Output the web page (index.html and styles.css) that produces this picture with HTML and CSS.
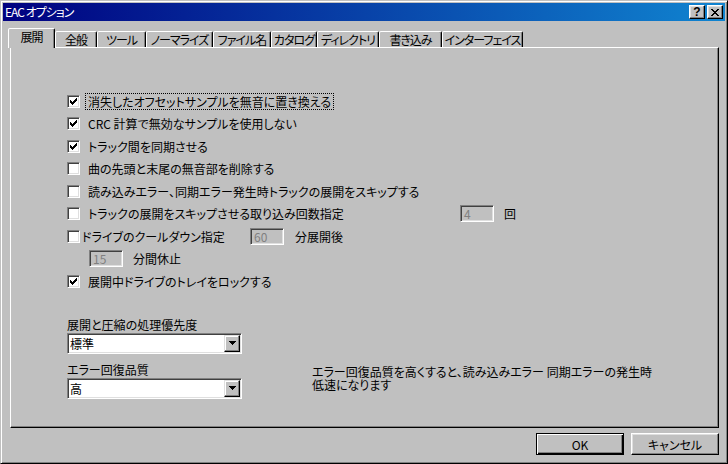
FILE: index.html
```html
<!DOCTYPE html>
<html lang="ja">
<head>
<meta charset="utf-8">
<title>EAC オプション</title>
<link rel="stylesheet" href="styles.css">
</head>
<body>
<div class="window">
  <div class="titlebar">
    <span class="title">EAC オプション</span>
    <div class="tbtns">
      <span class="tbtn q">?</span>
      <span class="tbtn"><svg width="8" height="7" viewBox="0 0 8 7" shape-rendering="crispEdges"><path d="M0 0h2v1h-2zM6 0h2v1h-2zM1 1h2v1h-2zM5 1h2v1h-2zM2 2h4v1h-4zM3 3h2v1h-2zM2 4h4v1h-4zM1 5h2v1h-2zM5 5h2v1h-2zM0 6h2v1h-2zM6 6h2v1h-2z" fill="#000"/></svg></span>
    </div>
  </div>

  <div class="tabs">
    <div class="tab active t1">展開</div>
    <div class="tab t2">全般</div>
    <div class="tab t3">ツール</div>
    <div class="tab t4">ノーマライズ</div>
    <div class="tab t5">ファイル名</div>
    <div class="tab t6">カタログ</div>
    <div class="tab t7">ディレクトリ</div>
    <div class="tab t8">書き込み</div>
    <div class="tab t9">インターフェイス</div>
  </div>

  <div class="panel">
    <div class="rows">
      <div class="row">
        <span class="cb"><svg width="11" height="11" viewBox="0 0 11 11" shape-rendering="crispEdges"><path d="M2 4h1v1h1v1h1v-1h1v-1h1v-1h1v-1h1v3h-1v1h-1v1h-1v1h-1v1h-1v-1h-1v-1h-1z" fill="#000"/></svg></span>
        <span class="lbl focus">消失したオフセットサンプルを無音に置き換える</span>
      </div>
      <div class="row">
        <span class="cb"><svg width="11" height="11" viewBox="0 0 11 11" shape-rendering="crispEdges"><path d="M2 4h1v1h1v1h1v-1h1v-1h1v-1h1v-1h1v3h-1v1h-1v1h-1v1h-1v1h-1v-1h-1v-1h-1z" fill="#000"/></svg></span>
        <span class="lbl">CRC 計算で無効なサンプルを使用しない</span>
      </div>
      <div class="row">
        <span class="cb"><svg width="11" height="11" viewBox="0 0 11 11" shape-rendering="crispEdges"><path d="M2 4h1v1h1v1h1v-1h1v-1h1v-1h1v-1h1v3h-1v1h-1v1h-1v1h-1v1h-1v-1h-1v-1h-1z" fill="#000"/></svg></span>
        <span class="lbl">トラック間を同期させる</span>
      </div>
      <div class="row">
        <span class="cb"></span>
        <span class="lbl">曲の先頭と末尾の無音部を削除する</span>
      </div>
      <div class="row">
        <span class="cb"></span>
        <span class="lbl">読み込みエラー、同期エラー発生時トラックの展開をスキップする</span>
      </div>
      <div class="row">
        <span class="cb"></span>
        <span class="lbl wide">トラックの展開をスキップさせる取り込み回数指定</span>
        <span class="tb">4</span>
        <span class="after">回</span>
      </div>
      <div class="row">
        <span class="cb"></span>
        <span class="lbl tight">ドライブのクールダウン指定</span>
        <span class="tb">60</span>
        <span class="after a11">分展開後</span>
      </div>
      <div class="row indent">
        <span class="tb">15</span>
        <span class="after">分間休止</span>
      </div>
      <div class="row">
        <span class="cb"><svg width="11" height="11" viewBox="0 0 11 11" shape-rendering="crispEdges"><path d="M2 4h1v1h1v1h1v-1h1v-1h1v-1h1v-1h1v3h-1v1h-1v1h-1v1h-1v1h-1v-1h-1v-1h-1z" fill="#000"/></svg></span>
        <span class="lbl">展開中ドライブのトレイをロックする</span>
      </div>
    </div>

    <div class="bottom">
      <div class="combos">
        <div class="clabel">展開と圧縮の処理優先度</div>
        <div class="combo">
          <span class="cval">標準</span>
          <span class="cbtn"><svg width="7" height="4" viewBox="0 0 7 4" shape-rendering="crispEdges"><path d="M0 0h7v1h-1v1h-1v1h-1v1h-1v-1h-1v-1h-1v-1h-1z" fill="#000"/></svg></span>
        </div>
        <div class="clabel second">エラー回復品質</div>
        <div class="combo">
          <span class="cval">高</span>
          <span class="cbtn"><svg width="7" height="4" viewBox="0 0 7 4" shape-rendering="crispEdges"><path d="M0 0h7v1h-1v1h-1v1h-1v1h-1v-1h-1v-1h-1v-1h-1z" fill="#000"/></svg></span>
        </div>
      </div>
      <div class="note">エラー回復品質を高くすると、読み込みエラー 同期エラーの発生時<br>低速になります</div>
    </div>
  </div>

  <div class="footer">
    <button class="btn default">OK</button>
    <button class="btn">キャンセル</button>
  </div>
</div>
</body>
</html>
```

FILE: styles.css
```css
html, body {
  margin: 0;
  padding: 0;
  background: #c0c0c0;
}
body {
  font-family: "Noto Sans CJK JP", "Noto Sans", sans-serif;
  font-size: 12px;
  color: #000;
  font-feature-settings: "palt";
}
.window {
  width: 728px;
  height: 464px;
  box-sizing: border-box;
  border: 1px solid;
  border-color: #c0c0c0 #000 #000 #c0c0c0;
  box-shadow: inset 1px 1px #fff, inset -1px -1px #808080;
  padding: 2px;
  display: flex;
  flex-direction: column;
  background: #c0c0c0;
}
.titlebar {
  height: 18px;
  flex: none;
  background: linear-gradient(to right, #000080, #1084d0);
  display: flex;
  align-items: center;
  justify-content: space-between;
  padding: 0 2px 0 2px;
  color: #fff;
}
.title {
  font-size: 12px;
  line-height: 18px;
  letter-spacing: -1px;
}
.tbtns {
  display: flex;
  gap: 2px;
}
.tbtn {
  width: 16px;
  height: 14px;
  box-sizing: border-box;
  background: #c0c0c0;
  border: 1px solid;
  border-color: #fff #000 #000 #fff;
  box-shadow: inset -1px -1px #808080, inset 1px 1px #dfdfdf;
  display: flex;
  align-items: center;
  justify-content: center;
  color: #000;
}
.tbtn.q {
  font-family: "Liberation Sans", sans-serif;
  font-weight: bold;
  font-size: 12px;
  line-height: 12px;
}
.tabs {
  display: flex;
  align-items: flex-end;
  height: 20px;
  flex: none;
  margin-top: 7px;
  margin-left: 5px;
  position: relative;
  z-index: 2;
}
.tab {
  height: 16px;
  margin-bottom: 1px;
  box-sizing: border-box;
  border: 1px solid;
  border-bottom: none;
  border-color: #fff #000 transparent #fff;
  box-shadow: inset -1px 0 #808080;
  border-radius: 2px 2px 0 0;
  text-align: center;
  line-height: 16px;
  white-space: nowrap;
  letter-spacing: -1px;
  background: #c0c0c0;
  flex: none;
}
.tab.active {
  height: 20px;
  margin-bottom: 0;
  line-height: 16px;
}
.t1 { width: 47px; }
.t2 { width: 42px; }
.t3 { width: 49px; }
.t4 { width: 67px; }
.t5 { width: 58px; }
.t6 { width: 46px; }
.t7 { width: 62px; }
.t8 { width: 63px; }
.t9 { width: 81px; }

.panel {
  margin: -1px 6px 0 7px;
  height: 381px;
  flex: none;
  box-sizing: border-box;
  border: 1px solid;
  border-color: #fff #000 #000 #fff;
  box-shadow: inset -1px -1px #808080;
  padding: 42px 0 0 56px;
  position: relative;
  z-index: 1;
}
.rows {
  display: flex;
  flex-direction: column;
}
.row {
  height: 22.5px;
  display: flex;
  align-items: center;
}
.row.indent {
  padding-left: 22px;
}
.cb {
  width: 13px;
  height: 13px;
  box-sizing: border-box;
  flex: none;
  border: 1px solid;
  border-color: #808080 #fff #fff #808080;
  background: #fff;
  box-shadow: inset 1px 1px #404040, inset -1px -1px #dfdfdf;
  display: block;
}
.cb svg {
  display: block;
}
.lbl {
  margin-left: 6px;
  padding: 0 2px;
  line-height: 15px;
  white-space: nowrap;
}
.lbl.focus {
  line-height: 13px;
  padding: 1px 2px;
  outline: 1px dotted #000;
}
.lbl.wide {
  width: 374px;
  box-sizing: border-box;
  flex: none;
}
.lbl.tight {
  margin-left: 0;
  width: 170px;
  box-sizing: border-box;
  flex: none;
}
.tb {
  width: 34px;
  height: 17px;
  box-sizing: border-box;
  flex: none;
  border: 1px solid;
  border-color: #808080 #fff #fff #808080;
  box-shadow: inset 1px 1px #404040, inset -1px -1px #dfdfdf;
  color: #808080;
  padding-left: 3px;
  line-height: 15px;
  font-size: 12px;
}
.after {
  margin-left: 10px;
  line-height: 15px;
}
.after.a11 {
  margin-left: 11px;
}
.bottom {
  display: flex;
  margin-top: 25px;
}
.combos {
  width: 175px;
  flex: none;
}
.clabel {
  line-height: 14px;
  white-space: nowrap;
}
.clabel.second {
  margin-top: 9px;
}
.combo {
  margin-top: 1px;
  height: 21px;
  box-sizing: border-box;
  border: 1px solid;
  border-color: #808080 #fff #fff #808080;
  box-shadow: inset 1px 1px #404040, inset -1px -1px #dfdfdf;
  background: #fff;
  padding: 1px;
  display: flex;
  align-items: center;
  justify-content: space-between;
}
.cval {
  padding-left: 1px;
  line-height: 17px;
}
.cbtn {
  width: 16px;
  height: 17px;
  box-sizing: border-box;
  background: #c0c0c0;
  border: 1px solid;
  border-color: #dfdfdf #000 #000 #dfdfdf;
  box-shadow: inset -1px -1px #808080, inset 1px 1px #fff;
  display: flex;
  align-items: center;
  justify-content: center;
}
.cbtn svg {
  display: block;
}
.note {
  margin-left: 70px;
  margin-top: 47px;
  line-height: 13px;
  white-space: nowrap;
}
.footer {
  display: flex;
  justify-content: flex-end;
  gap: 7px;
  margin-top: 5px;
  padding-right: 6px;
}
.btn {
  width: 88px;
  height: 22px;
  box-sizing: border-box;
  padding: 0;
  margin: 0;
  font-family: "Noto Sans CJK JP", sans-serif;
  font-feature-settings: "palt";
  font-size: 12px;
  color: #000;
  background: #c0c0c0;
  border: 1px solid;
  border-color: #fff #000 #000 #fff;
  box-shadow: inset -1px -1px #808080, inset 1px 1px #dfdfdf;
}
.btn.default {
  border-color: #000;
  box-shadow: inset 1px 1px #fff, inset -1px -1px #000, inset -2px -2px #808080;
}
```
